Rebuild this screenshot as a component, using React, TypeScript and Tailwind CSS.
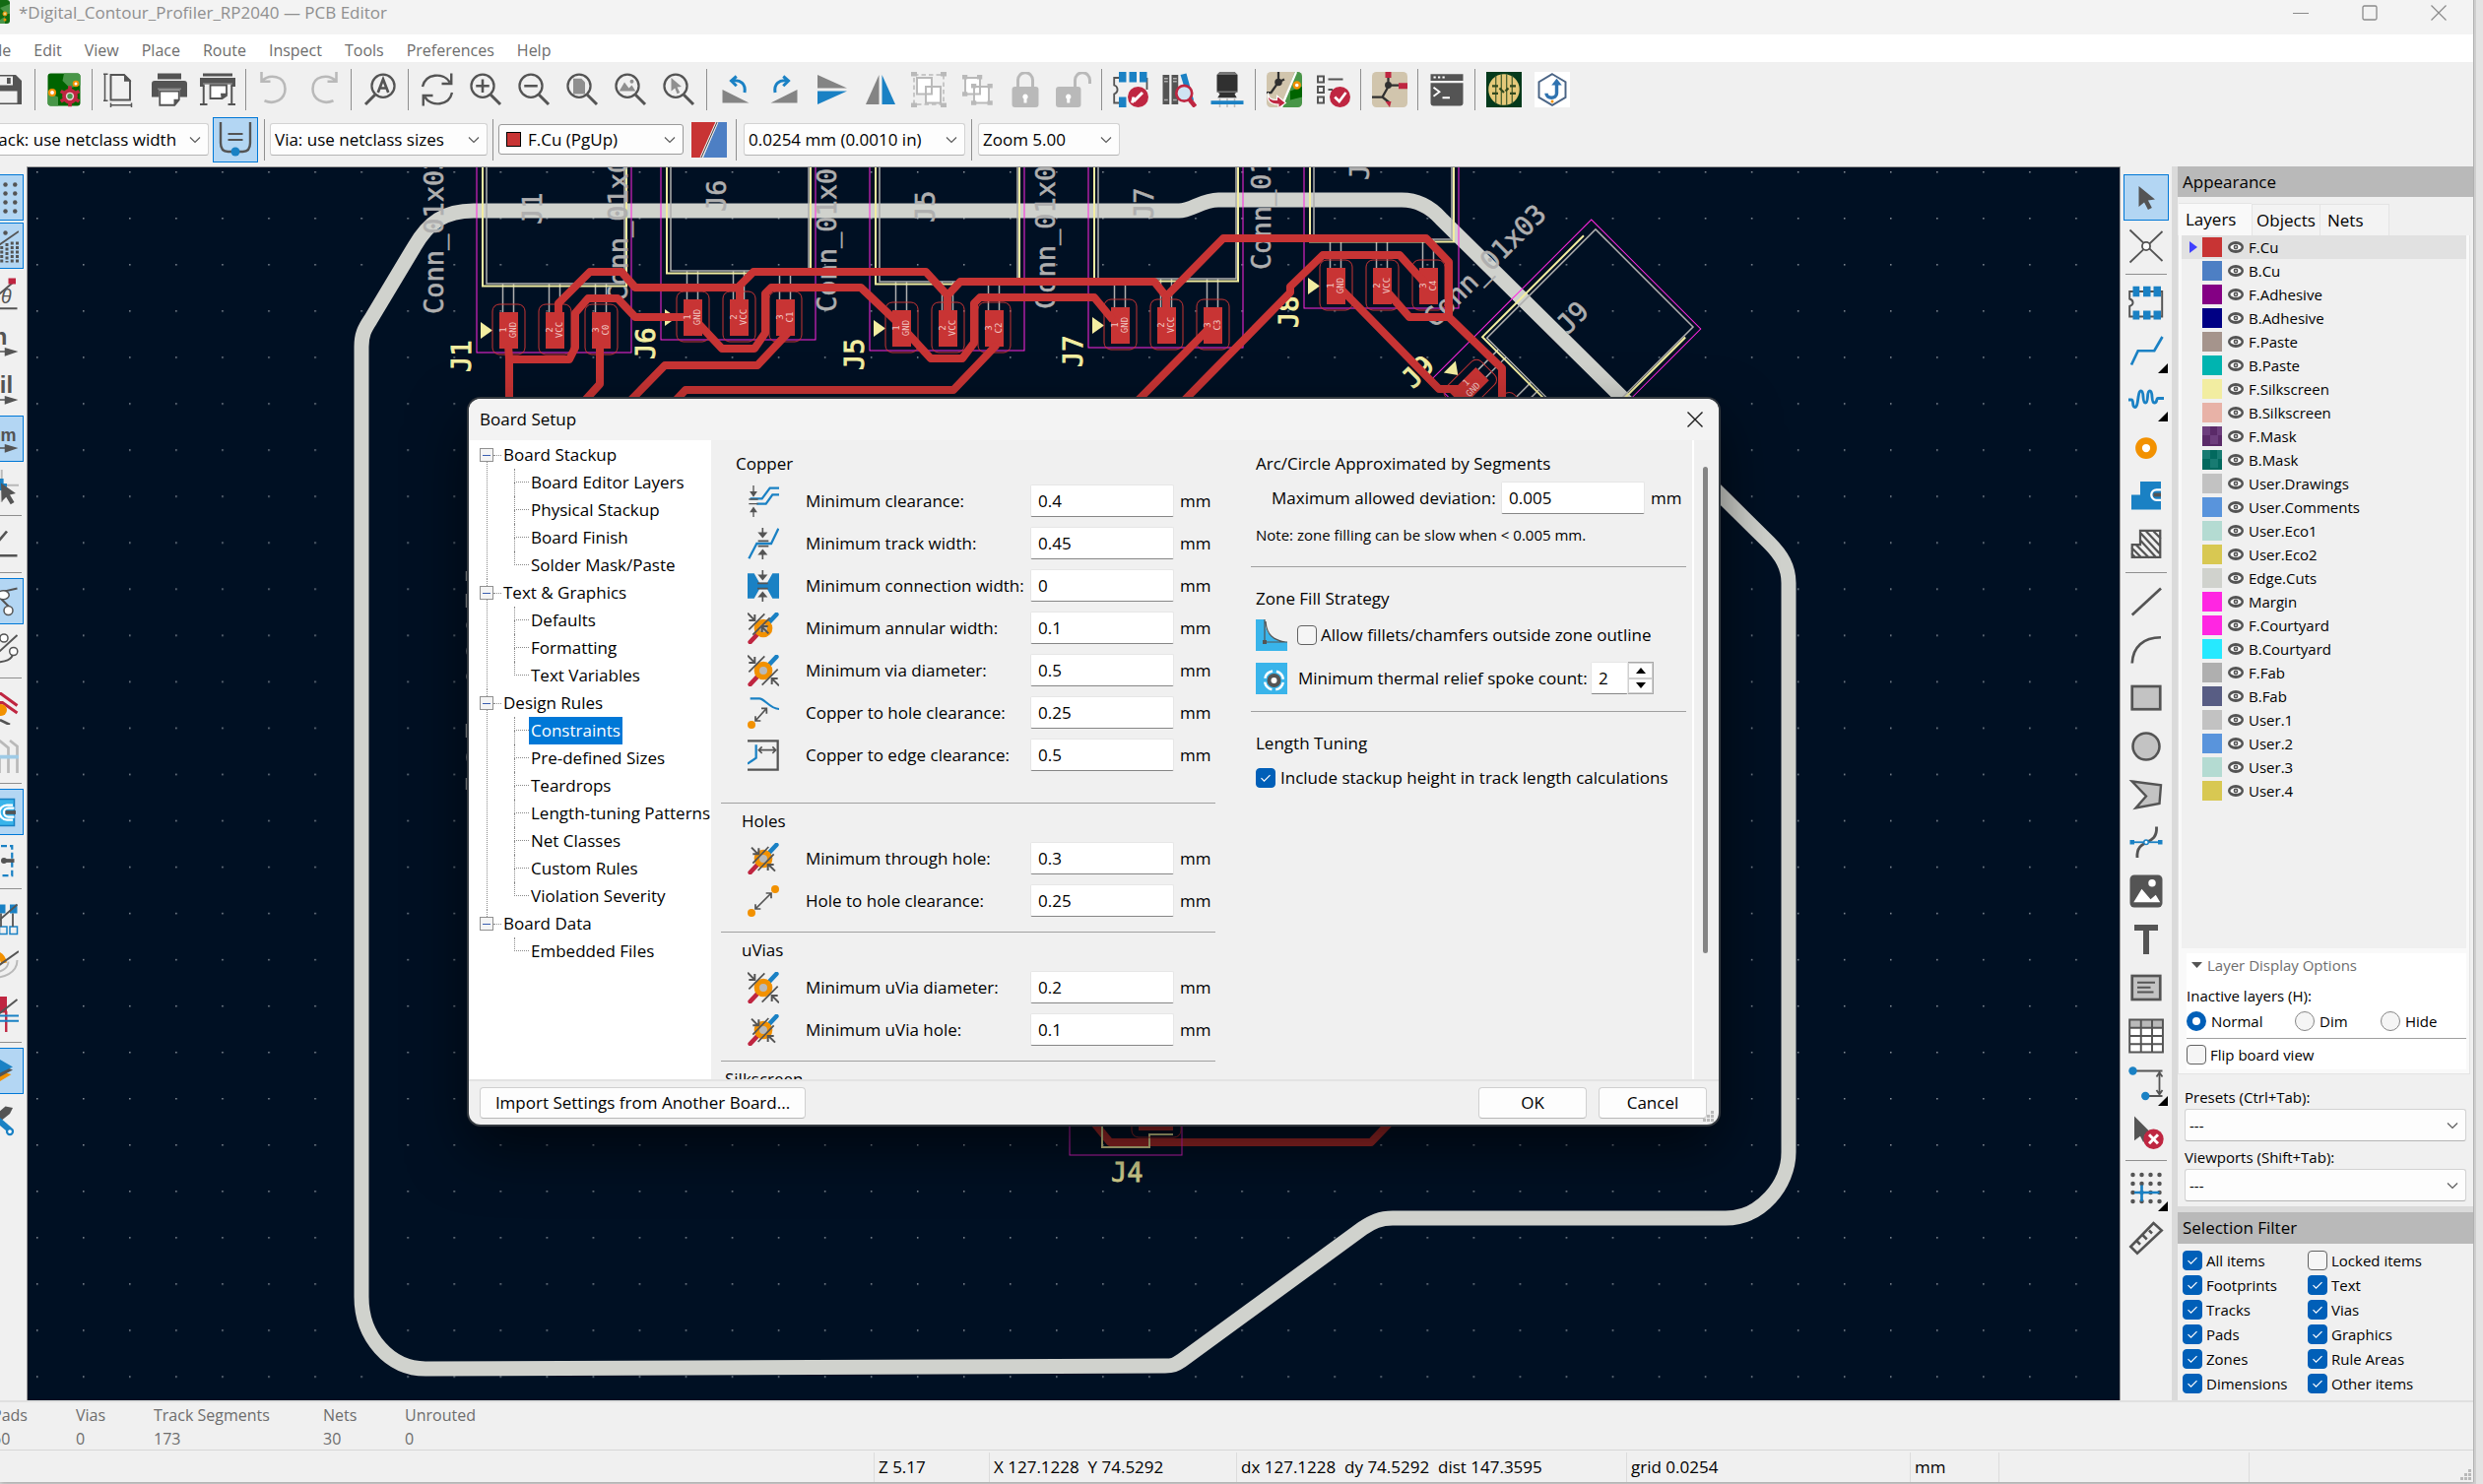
import { useState } from "react";
import type { ReactNode } from "react";

const DARK = "#545454";
const BLUE = "#1a81c4";
const RED = "#bf2641";
const ORANGE = "#f29100";
const GRAY = "#b9b9b9";

/* ---------- shared bits ---------- */

function Icon({ children, className = "size-9" }: { children: ReactNode; className?: string }) {
  return (
    <svg viewBox="0 0 24 24" className={`${className} shrink-0`} fill="none" aria-hidden="true">
      {children}
    </svg>
  );
}

function Chevron() {
  return (
    <svg
      viewBox="0 0 12 12"
      className="size-3 col-start-1 row-start-1 justify-self-end mr-2 pointer-events-none"
      fill="none"
      aria-hidden="true"
    >
      <path d="M1 3.5l5 5 5-5" stroke="#5c5c5c" strokeWidth="1.2" />
    </svg>
  );
}

interface ComboProps {
  label: string;
  value: string;
  className: string;
  selectClass?: string;
  swatch?: boolean;
}

function Combo({ label, value, className, selectClass = "pl-1 border-[#d2d2d2] border-b-[#b4b4b4]", swatch }: ComboProps) {
  return (
    <div className={`grid items-center shrink-0 ${className}`}>
      <select
        aria-label={label}
        className={`col-start-1 row-start-1 size-full appearance-none rounded-[3px] border bg-[#fdfdfd] text-black ${selectClass}`}
      >
        <option>{value}</option>
      </select>
      {swatch ? (
        <span className="col-start-1 row-start-1 ml-2 w-[15px] h-[15px] bg-[#c83434] border border-black pointer-events-none" />
      ) : null}
      <Chevron />
    </div>
  );
}

interface CheckProps {
  label: string;
  checked?: boolean;
  className?: string;
}

function Check({ label, checked = false, className = "gap-1" }: CheckProps) {
  return (
    <label className={`flex items-center whitespace-nowrap ${className}`}>
      <span className="grid size-5 shrink-0">
        <input
          type="checkbox"
          defaultChecked={checked}
          className="peer col-start-1 row-start-1 size-5 appearance-none rounded-[4px] border border-[#626262] bg-[#f5f5f5] checked:border-[#005fb8] checked:bg-[#005fb8]"
        />
        <svg
          viewBox="0 0 20 20"
          className="col-start-1 row-start-1 size-5 pointer-events-none hidden peer-checked:block"
          fill="none"
          aria-hidden="true"
        >
          <path d="M5.5 10.2l3 3 6-6" stroke="#fff" strokeWidth="1.2" />
        </svg>
      </span>
      <span>{label}</span>
    </label>
  );
}

/* ---------- top toolbar icons ---------- */

const lens = (
  <>
    <circle cx="10" cy="9.5" r="7.7" stroke={DARK} strokeWidth="1.5" />
    <path d="M15.5 15.5l6.5 6.5" stroke={DARK} strokeWidth="2" />
  </>
);

const topTools: Array<{ name: string; icon: ReactNode } | null> = [
  {
    name: "Save",
    icon: (
      <>
        <path d="M2 2h16l4 4v16H2z" fill={DARK} />
        <path d="M6 3h10v6H6zM5 13h14v8H5z" fill="#f0f0f0" />
        <path d="M12 4h2.500v4H12z" fill={DARK} />
      </>
    ),
  },
  null,
  {
    name: "Board Setup",
    icon: (
      <>
        <rect x="1" y="1" width="22" height="22" rx="2" fill="#006400" />
        <path d="M12 1h9a2 2 0 012 2v6l-7 2-5-5zM1 14l7 3v6H3a2 2 0 01-2-2z" fill="#489648" />
        <circle cx="4" cy="14" r="2" fill="#fff" stroke={ORANGE} strokeWidth="1.4" />
        <circle cx="20" cy="8" r="1.6" fill="#fff" stroke={ORANGE} strokeWidth="1.200" />
        <circle cx="16" cy="16.500" r="4" fill="#e8d5d8" stroke={RED} strokeWidth="2.500" />
        <path d="M16 9.500v3M16 20.500v3M9.800 13l2.600 1.500M19.600 18.500l2.600 1.500M9.800 20l2.600-1.500M19.600 14.500l2.600-1.500" stroke={RED} strokeWidth="2.500" />
        <circle cx="16" cy="16.500" r="1.800" fill="#489648" />
      </>
    ),
  },
  null,
  {
    name: "Page Settings",
    icon: (
      <>
        <path d="M5 2h9l4 4v13H5z" stroke={DARK} strokeWidth="1.300" />
        <path d="M14 1.500v5h5z" fill={DARK} />
        <path d="M0 1.500h3M1 1.500v18M0 19.500h3M5 22.500h14M5 21v3M19 21v3" stroke={DARK} strokeWidth="1" />
      </>
    ),
  },
  {
    name: "Print",
    icon: (
      <>
        <path d="M4 1h16v4H4zM2 6h20a2 2 0 012 2v9h-5v-5H5v5H0V8a2 2 0 012-2z" fill={DARK} />
        <path d="M4 11h16v1H4z" fill="#848484" />
        <path d="M5.500 13h13v6l-3 3.500H5.500z" fill="#fff" stroke={DARK} strokeWidth="1.200" />
        <path d="M15 18.500h4l-4 4.500z" fill={DARK} />
      </>
    ),
  },
  {
    name: "Plot",
    icon: (
      <>
        <path d="M2 1h20v2H2zM0 4h24v6h-3V8H3v2H0z" fill={DARK} />
        <path d="M2 8h20" stroke="#848484" />
        <path d="M2.500 9v13M21.500 9v13M0 22h5M19 22h5" stroke={DARK} strokeWidth="1.300" />
        <path d="M7 9h11v7l-3 2H7z" fill="#fff" stroke={DARK} strokeWidth="1.200" />
        <path d="M14 14.500h5l-4.500 4z" fill={DARK} />
      </>
    ),
  },
  null,
  {
    name: "Undo",
    icon: <path d="M3 0v6.500h6M3.500 6C8 1.500 19 2 19 11.500c0 7-7 11-14 8" stroke={GRAY} strokeWidth="1.700" />,
  },
  {
    name: "Redo",
    icon: <path d="M21 0v6.500h-6M20.500 6C16 1.500 5 2 5 11.500c0 7 7 11 14 8" stroke={GRAY} strokeWidth="1.700" />,
  },
  null,
  {
    name: "Find",
    icon: (
      <>
        <circle cx="14" cy="9.500" r="7.700" stroke={DARK} strokeWidth="1.500" />
        <path d="M8.500 15.500L2 22" stroke={DARK} strokeWidth="2" />
        <path d="M10.500 14L14 5l3.500 9M11.800 11h4.500" stroke={DARK} strokeWidth="1.800" />
      </>
    ),
  },
  null,
  {
    name: "Refresh",
    icon: (
      <path d="M2 10C4 1 16 0 20.500 7M21.500 1v7H15M22 14c-2 9-14 10-18.500 3M2.500 23v-7H9" stroke={DARK} strokeWidth="1.600" />
    ),
  },
  { name: "Zoom In", icon: <>{lens}<path d="M10 5v9M5.500 9.500h9" stroke={DARK} strokeWidth="1.700" /></> },
  { name: "Zoom Out", icon: <>{lens}<path d="M5.500 9.500h9" stroke={DARK} strokeWidth="1.700" /></> },
  { name: "Zoom to Fit", icon: <>{lens}<path d="M6 4.500h5.500L14 7v8H6z" fill="#8f8f8f" /></> },
  { name: "Zoom to Objects", icon: <>{lens}<path d="M4.500 13L8 7l3 4 2-2 2.500 4z" fill="#8f8f8f" /><circle cx="13" cy="6.500" r="1.300" fill="#8f8f8f" /></> },
  { name: "Zoom to Selection", icon: <>{lens}<path d="M7 4l7 6-3 .4 1.800 3.600-1.800.8L9.500 11 7 13z" fill="#8f8f8f" /></> },
  null,
  {
    name: "Rotate Counterclockwise",
    icon: (
      <>
        <path d="M3 12v9h18z" fill="#848484" />
        <path d="M18 14c1-6-3-9-8-8M12.500 3L9 6l3.500 3.500" stroke={BLUE} strokeWidth="2" />
      </>
    ),
  },
  {
    name: "Rotate Clockwise",
    icon: (
      <>
        <path d="M21 12v9H3z" fill="#848484" />
        <path d="M6 14c-1-6 3-9 8-8M11.500 3L15 6l-3.500 3.500" stroke={BLUE} strokeWidth="2" />
      </>
    ),
  },
  {
    name: "Mirror Vertically",
    icon: (
      <>
        <path d="M2 2v9h20z" fill="#848484" />
        <path d="M2 22v-9h20z" fill={BLUE} />
      </>
    ),
  },
  {
    name: "Mirror Horizontally",
    icon: (
      <>
        <path d="M2 22h9V2z" fill="#848484" />
        <path d="M22 22h-9V2z" fill={BLUE} />
      </>
    ),
  },
  {
    name: "Group",
    icon: (
      <>
        <rect x="2" y="2" width="20" height="20" stroke={GRAY} strokeWidth="1" strokeDasharray="3 2" />
        <path d="M0 0h4v3H0zM20 0h4v3h-4zM0 21h4v3H0zM20 21h4v3h-4z" fill={GRAY} />
        <path d="M4 4h10v11H4zM10 10h10v11H10z" fill="#fff" stroke={GRAY} strokeWidth="1.300" />
      </>
    ),
  },
  {
    name: "Ungroup",
    icon: (
      <>
        <path d="M4 4h10v11H4zM10 10h10v11H10z" fill="#fff" stroke={GRAY} strokeWidth="1.300" />
        <path d="M2 2h3.500v3H2zM12 2h3.500v3H12zM2 13.500h3.500v3H2zM8 8h3.500v3H8zM19 8h3.500v3H19zM8 19.500h3.500v3H8zM19 19.500h3.500v3H19z" fill={GRAY} />
      </>
    ),
  },
  {
    name: "Lock",
    icon: (
      <>
        <path d="M7 11V5.500a5 5 0 0110 0V11" stroke={GRAY} strokeWidth="2" />
        <rect x="3" y="10" width="18" height="14" rx="2" fill={GRAY} />
        <path d="M12 15a1.800 1.800 0 011 3.300V21h-2v-2.700A1.800 1.800 0 0112 15z" fill="#fff" />
      </>
    ),
  },
  {
    name: "Unlock",
    icon: (
      <>
        <path d="M13 11V5.500a5 5 0 0110 0V8" stroke={GRAY} strokeWidth="2" />
        <rect x="0" y="10" width="17" height="14" rx="2" fill={GRAY} />
        <path d="M8.500 15a1.800 1.800 0 011 3.300V21h-2v-2.700A1.800 1.800 0 018.500 15z" fill="#fff" />
      </>
    ),
  },
  null,
  {
    name: "Footprint Editor",
    icon: (
      <>
        <path d="M4 4H.8v5c3 1 3 5 0 6v6H4M23 4v8" stroke={DARK} strokeWidth="1.200" />
        <path d="M4 0h5v7H4zM11 0h5v7h-5zM18 0h5v7h-5zM4 17h5v7H4z" fill={BLUE} />
        <circle cx="17" cy="17" r="7" fill={RED} />
        <path d="M14 20l6-6M14 17l-1 4" stroke="#fff" strokeWidth="2" />
      </>
    ),
  },
  {
    name: "Footprint Library Browser",
    icon: (
      <>
        <path d="M1 2h4.500v20H1zM7 2h4.500v20H7z" fill={DARK} />
        <path d="M2 4.500h2.500M2 6.500h2.500M2 19h2.500M8 4.500h2.500M8 6.500h2.500M8 19h2.500" stroke="#b0b0b0" />
        <path d="M13 2l4-1 5 18-3 2z" fill={BLUE} />
        <circle cx="15.500" cy="14.500" r="5.300" fill="#cfe3f2" stroke={RED} strokeWidth="1.800" />
        <path d="M19 18.500l4 5" stroke={RED} strokeWidth="3" />
      </>
    ),
  },
  {
    name: "3D Viewer",
    icon: (
      <>
        <path d="M7 0h10l2 2v11l-2 2 1.500 2.500H5.500L7 15l-2-2V2z" fill="#303030" />
        <path d="M7 0h10l2 2H5zM5 13h14v1H5z" fill="#777" />
        <path d="M7 18v6M12 18v6M17 18v6" stroke={GRAY} />
        <path d="M1 19.500h22V22H1z" fill={BLUE} />
      </>
    ),
  },
  null,
  {
    name: "Update PCB from Schematic",
    icon: (
      <>
        <rect width="24" height="24" rx="3" fill="#d1c5ad" />
        <path d="M19 0h2a3 3 0 013 3v18a3 3 0 01-3 3H10z" fill="#489648" />
        <path d="M16 13l8-3v7l-8 2z" fill="#006400" />
        <circle cx="20.500" cy="9" r="2" fill="#fff" stroke={ORANGE} strokeWidth="1.600" />
        <path d="M8 0v7L3 14H0M8 7l4-2" stroke="#303030" strokeWidth="1.500" />
        <circle cx="8" cy="7" r="2.500" fill="#303030" />
        <path d="M20 0L10 24" stroke="#fff" strokeWidth="1.500" />
        <path d="M1 14c0 4 2 5 6 5v-3l6 5-5 3.500V22c-6 0-8-3-7-8z" fill={RED} stroke="#fff" strokeWidth=".7" />
      </>
    ),
  },
  {
    name: "Design Rules Checker",
    icon: (
      <>
        <path d="M2 3h4v4H2zM2 10h4v4H2zM2 17h4v4H2zM9 5h10M9 12h3" stroke={DARK} strokeWidth="1.300" />
        <circle cx="17" cy="17" r="7" fill={RED} />
        <path d="M13.500 17l3 3 4.500-6" stroke="#fff" strokeWidth="1.800" />
      </>
    ),
  },
  null,
  {
    name: "Schematic Editor",
    icon: (
      <>
        <rect width="24" height="24" rx="3" fill="#d1c5ad" />
        <path d="M11 4v6L7 17H0M11 9h7M7 17l5 4" stroke="#303030" strokeWidth="1.500" />
        <path d="M9 0h4v4H9zM18 7.500h6v4h-6z" fill={RED} />
        <path d="M9 20h4l-1 4z" fill={RED} />
        <circle cx="11" cy="9" r="2.300" fill="#303030" />
      </>
    ),
  },
  null,
  {
    name: "Scripting Console",
    icon: (
      <>
        <path d="M1 1.500h22v4.500H1zM1 7.500h22V21a2 2 0 01-2 2H3a2 2 0 01-2-2z" fill={DARK} />
        <path d="M3 3.700h1.500M6 3.700h1.500M9 3.700h1.500" stroke="#fff" strokeWidth="1.300" />
        <path d="M3 10.500l4 3-4 3M9 17.500h5" stroke="#fff" strokeWidth="1.200" />
      </>
    ),
  },
  null,
  {
    name: "Round Tracks",
    icon: (
      <>
        <path d="M0 0h24v24H0z" fill="#053a1c" />
        <circle cx="12" cy="12" r="10.500" fill="#e5c97a" />
        <path d="M6.500 2.500v19M10.200 1.500v21M13.800 1.500v21M17.500 2.500v19" stroke="#3f5a2a" strokeWidth=".8" />
        <path d="M4 9.500h4M4 14.500h4M16 9.500h4M16 14.500h4M9 11l3 3M15 11l-2 2" stroke="#31491f" strokeWidth="1.500" />
      </>
    ),
  },
  {
    name: "Fabrication Toolkit",
    icon: (
      <>
        <path d="M0 0h24v24H0z" fill="#fff" />
        <path d="M12 1.500l9 5.300v10.500l-9 5.200-9-5.200V6.800z" stroke="#4a6485" strokeWidth="1.300" />
        <path d="M15 8v6.500c0 4-7 4-7 0" stroke="#2f73b0" strokeWidth="2.300" />
        <path d="M11.500 9L15 4.500 18.500 9z" fill="#2f73b0" />
        <circle cx="12" cy="20" r="1" fill={ORANGE} />
      </>
    ),
  },
];

/* ---------- left and right tool strips ---------- */

interface Tool {
  name: string;
  icon: ReactNode;
  on?: boolean;
  more?: boolean;
}

const dots = (xs: number[], ys: number[]) =>
  xs.map((x) => ys.map((y) => <circle key={`${x}-${y}`} cx={x} cy={y} r="1.500" fill={DARK} />));

const leftTools: Array<Tool | null> = [
  { name: "Grid", on: true, icon: dots([2, 8.500, 15, 21.500], [3, 9, 15, 21]) },
  {
    name: "Grid Overrides",
    on: true,
    icon: (
      <>
        {dots([3, 15], [3])}
        <path d="M1 18L24 2" stroke={DARK} strokeWidth="1.200" />
        <path d="M12.500 12v11M16 10v13M19.500 9v14M23 9v14" stroke={DARK} strokeWidth="2" strokeDasharray="2 1" />
      </>
    ),
  },
  {
    name: "Polar Coordinates",
    icon: (
      <>
        <path d="M0 21L20 4M0 21.500h23" stroke={DARK} strokeWidth="1.300" />
        <path d="M17 1h5v4h-5z" fill={RED} />
        <text x="12" y="18" fontSize="13" fontStyle="italic" fill={DARK} fontFamily="Liberation Sans, sans-serif">θ</text>
      </>
    ),
  },
  {
    name: "Inches",
    icon: (
      <>
        <text x="2" y="13" fontSize="16" fontWeight="700" fill={DARK} fontFamily="Liberation Sans, sans-serif">in</text>
        <path d="M0 18h15v-2l7 2-7 2.500V18" fill={DARK} stroke={DARK} />
      </>
    ),
  },
  {
    name: "Mils",
    icon: (
      <>
        <text x="-3" y="13" fontSize="16" fontWeight="700" fill={DARK} fontFamily="Liberation Sans, sans-serif">mil</text>
        <path d="M0 18h15v-2l7 2-7 2.500V18" fill={DARK} stroke={DARK} />
      </>
    ),
  },
  {
    name: "Millimeters",
    on: true,
    icon: (
      <>
        <text x="1" y="13" fontSize="12" fontWeight="700" fill={DARK} fontFamily="Liberation Sans, sans-serif">mm</text>
        <path d="M0 18h15v-2l7 2-7 2.500V18" fill={DARK} stroke={DARK} />
      </>
    ),
  },
  {
    name: "Full-Window Crosshair",
    icon: (
      <>
        <path d="M12.500 0v22M0 10.500h24" stroke={GRAY} strokeWidth="1.300" />
        <path d="M8 10.500h8M12.500 6v8" stroke={BLUE} strokeWidth="2.500" />
        <path d="M12 9l10 7-4 1 3 5-2.500 1.500-3-5-3 3z" fill={DARK} />
      </>
    ),
  },
  null,
  { name: "Free Angle", icon: <path d="M16 3L2 19.500h21" stroke={DARK} strokeWidth="1.800" /> },
  null,
  {
    name: "Ratsnest",
    on: true,
    icon: (
      <>
        <path d="M0 6h10L23 3M10 8l9 9" stroke={DARK} strokeWidth="1.300" />
        <ellipse cx="13.500" cy="7.500" rx="4" ry="3" fill="#fff" stroke={DARK} />
        <circle cx="17" cy="18" r="3" fill="#fff" stroke={DARK} />
      </>
    ),
  },
  {
    name: "Curved Ratsnest",
    icon: (
      <>
        <path d="M0 23L23 2M20 14c0 6-8 6-14 7" stroke={DARK} strokeWidth="1.300" />
        <circle cx="14" cy="4" r="2.700" fill="#fff" stroke={DARK} />
        <circle cx="20.500" cy="13" r="2.700" fill="#fff" stroke={DARK} />
      </>
    ),
  },
  null,
  {
    name: "Inactive Layer Display",
    icon: (
      <>
        <path d="M0 3h12l11 8M3 9h10l10 7" stroke={RED} strokeWidth="2" />
        <path d="M0 21h12l6 3" stroke={DARK} strokeWidth="1.800" />
        <circle cx="12" cy="14" r="4" fill={ORANGE} />
      </>
    ),
  },
  {
    name: "Net Highlighting",
    icon: (
      <>
        <path d="M11 2l6 5v17M3 8l8 5v11M18 2l5 4v18" stroke={GRAY} strokeWidth="1.800" />
        <path d="M0 13h24" stroke="#9fcbe6" strokeWidth="2.500" />
      </>
    ),
  },
  null,
  {
    name: "Zone Fills",
    on: true,
    icon: (
      <>
        <path d="M0 3h21v18H0z" fill="#39b4ea" stroke={BLUE} />
        <path d="M20 7h-4a5 5 0 000 10h4M21 9h-4a3 3 0 000 6h4" stroke="#fff" strokeWidth="1.500" />
        <path d="M15 12h7" stroke={DARK} strokeWidth="2.500" />
      </>
    ),
  },
  {
    name: "Zone Outlines",
    icon: (
      <>
        <path d="M0 2h19.500v20H0" stroke={BLUE} strokeWidth="1.500" strokeDasharray="4 2" />
        <path d="M14 12h7" stroke={DARK} strokeWidth="2.500" />
        <circle cx="14" cy="12" r="2" fill={DARK} />
      </>
    ),
  },
  null,
  {
    name: "Sketch Pads",
    icon: (
      <>
        <path d="M10 3h5v6h-5zM18 3h5v6h-5zM0 3h7v6H0z" fill={BLUE} />
        <path d="M11 18h5v5h-5zM18 18h5v5h-5z" stroke={BLUE} />
        <path d="M0 23L23 3M20 9v9M12 9v9" stroke={DARK} strokeWidth="1.200" />
      </>
    ),
  },
  {
    name: "Sketch Vias",
    icon: (
      <>
        <path d="M0 4c8-2 13 0 14 6M0 9c6-1 9 0 10 3" stroke={ORANGE} strokeWidth="4" />
        <path d="M23 8c0 8-8 13-22 12M17 9c0 5-6 8-12 7" stroke={GRAY} strokeWidth="1.300" />
        <path d="M0 19L24 2" stroke={DARK} strokeWidth="1.300" />
      </>
    ),
  },
  {
    name: "Sketch Tracks",
    icon: (
      <>
        <path d="M8 0h8v11H8z" fill={RED} />
        <path d="M15.500 10v14" stroke={RED} strokeWidth="1.600" />
        <path d="M0 13h24M0 16.500h24" stroke={BLUE} strokeWidth="1.300" />
        <path d="M0 20L23 2" stroke={DARK} strokeWidth="1.300" />
      </>
    ),
  },
  null,
  {
    name: "Appearance Manager",
    on: true,
    icon: (
      <>
        <path d="M0 20L4 23l15-9-4-1z" fill={ORANGE} />
        <path d="M0 17l3 3 17-9-5-2z" fill={DARK} />
        <path d="M-8 8L6 1l14 8L5 16z" fill={BLUE} />
      </>
    ),
  },
  {
    name: "Properties Manager",
    icon: (
      <>
        <path d="M0 16L15 3l5 1-2 4L3 20z" fill={DARK} />
        <path d="M4 7l14 12" stroke={BLUE} strokeWidth="4" />
        <circle cx="18" cy="20" r="2" fill="#fff" stroke={BLUE} strokeWidth="1.500" />
      </>
    ),
  },
];

const rightTools: Array<Tool | null> = [
  { name: "Select", on: true, icon: <path d="M7 4l11 9-4.700.6 2.600 5-2.600 1.400-2.600-5L7 18z" fill={DARK} /> },
  {
    name: "Local Ratsnest",
    icon: (
      <>
        <path d="M1 1l22 21M23 2L1 23" stroke={DARK} strokeWidth="1.200" />
        <circle cx="12" cy="12" r="2.700" fill="#fff" stroke={DARK} strokeWidth="1.200" />
      </>
    ),
  },
  null,
  {
    name: "Place Footprints",
    icon: (
      <>
        <path d="M.8 4v5c3 1 3 4 0 5v7h22V4z" stroke={DARK} strokeWidth="1.300" />
        <path d="M3 .500h4.500v7H3zM10 .500h5v7h-5zM17 .500h5v7h-5zM3 17h4.500v6H3zM10 17h5v6h-5zM17 17h5v6h-5z" fill={BLUE} />
      </>
    ),
  },
  { name: "Route Tracks", more: true, icon: <path d="M2 21l4.500-9.500h11L23 2" stroke={BLUE} strokeWidth="1.800" /> },
  {
    name: "Tune Length",
    more: true,
    icon: (
      <path
        d="M0 12h2c2 0 0 5 2.500 5S6 6 8.500 6 9 14 11.500 14s.5-8 3-8 .5 8 3 8 1-3 2.500-3H24"
        stroke={BLUE}
        strokeWidth="1.900"
      />
    ),
  },
  { name: "Place Vias", icon: <circle cx="12" cy="12" r="5" fill="#fff" stroke={ORANGE} strokeWidth="4.500" /> },
  {
    name: "Draw Filled Zones",
    icon: (
      <>
        <path d="M8 2h14v19H2V11h6z" fill={BLUE} />
        <path d="M22 7.500h-3a3.500 3.500 0 000 7h3" stroke="#fff" strokeWidth="1.500" />
        <path d="M17 11h5" stroke={DARK} strokeWidth="2.500" />
      </>
    ),
  },
  {
    name: "Draw Rule Areas",
    icon: (
      <path
        d="M8 2.500h13.500v18h-19V12H8zM8 4l13 14M12 3l9.500 10M17 3l5 5M8 9l11 12M5 12l9 9M2 14l7 7M2 18l3 3"
        stroke={DARK}
        strokeWidth="1.500"
      />
    ),
  },
  null,
  { name: "Draw Lines", icon: <path d="M2.500 21L22 3" stroke={DARK} strokeWidth="1.800" /> },
  { name: "Draw Arcs", icon: <path d="M2.500 21C3 10 10 3.500 22 3.500" stroke={DARK} strokeWidth="1.800" /> },
  { name: "Draw Rectangles", icon: <rect x="2.500" y="4" width="19" height="15.500" fill="#c3c3c3" stroke={DARK} strokeWidth="1.800" /> },
  { name: "Draw Circles", icon: <circle cx="12" cy="12" r="9" fill="#c3c3c3" stroke={DARK} strokeWidth="1.700" /> },
  { name: "Draw Polygons", icon: <path d="M2.500 3L22 5.500 21 18 5 21l7-8z" fill="#c3c3c3" stroke={DARK} strokeWidth="1.600" /> },
  {
    name: "Draw Bezier Curves",
    icon: (
      <>
        <path d="M19 1c1 14-14 7-13 21" stroke={DARK} strokeWidth="1.900" />
        <path d="M2 11.500h20" stroke={BLUE} strokeWidth="1.200" />
        <path d="M1 10h3v3H1zM20 10h3v3h-3z" fill={BLUE} />
        <circle cx="12" cy="11.500" r="1.500" fill="#fff" stroke={BLUE} />
      </>
    ),
  },
  {
    name: "Place Images",
    icon: (
      <>
        <rect x="1" y="1" width="22" height="22" rx="3" fill={DARK} />
        <path d="M3.500 19.500l5.500-9 6 7 3.500-3 3 5z" fill="#fff" />
        <circle cx="16" cy="6.500" r="2.500" fill="#fff" />
      </>
    ),
  },
  { name: "Place Text", icon: <path d="M4 2h16v4h-6v16h-4V6H4z" fill={DARK} /> },
  {
    name: "Draw Text Boxes",
    icon: (
      <>
        <rect x="2.500" y="4" width="19" height="16" fill="#c3c3c3" stroke={DARK} strokeWidth="1.800" />
        <path d="M6 8.500h12M6 11.800h9M6 15h11" stroke={DARK} strokeWidth="1.300" />
      </>
    ),
  },
  {
    name: "Draw Tables",
    icon: (
      <>
        <path d="M.8 1h22.500v5.500H.8z" fill={GRAY} />
        <path d="M.8 6.500h22.500V23H.8z" fill="#fff" />
        <path d="M.8 1h22.500v22H.8zM.8 6.500h22.500M.8 12h22.500M.8 17.500h22.500M8.500 1v22M16 1v22" stroke={DARK} strokeWidth="1.300" />
      </>
    ),
  },
  {
    name: "Draw Dimensions",
    more: true,
    icon: (
      <>
        <path d="M3 3h20M12 20h11M21 4.500v14M19 7l2-3 2 3M19 16l2 3 2-3" stroke={DARK} strokeWidth="1.200" />
        <circle cx="3" cy="3" r="2.800" fill={BLUE} />
        <circle cx="11.500" cy="20" r="2.800" fill={BLUE} />
      </>
    ),
  },
  {
    name: "Delete Items",
    icon: (
      <>
        <path d="M4 1l12 12-5 .5 2 4-3 1-2-4-4 3z" fill={DARK} />
        <circle cx="17" cy="16.500" r="6.800" fill={RED} />
        <path d="M14 13.500l6 6M20 13.500l-6 6" stroke="#fff" strokeWidth="2" />
      </>
    ),
  },
  null,
  {
    name: "Grid Origin",
    more: true,
    icon: (
      <>
        {dots([3, 9, 15, 21], [2, 8, 14, 20])}
        <path d="M9 9v11M4 14h17" stroke={BLUE} strokeWidth="1.800" />
      </>
    ),
  },
  {
    name: "Measure",
    icon: (
      <path
        d="M1.500 18L17 2l5.500 5L6 22.500zM6 14.500l2 2M10 10.500l2.500 2.500M14 7l2 2"
        stroke={DARK}
        strokeWidth="1.700"
      />
    ),
  },
];

function ToolStrip({ tools }: { tools: Array<Tool | null> }) {
  return (
    <>
      {tools.map((t, i) =>
        t ? (
          <button
            key={t.name}
            type="button"
            aria-label={t.name}
            className={`relative my-px w-[46px] h-[47px] shrink-0 flex items-center justify-center border ${
              t.on ? "border-[#0078d7] bg-[#b3d6f3]" : "border-transparent"
            }`}
          >
            <Icon>{t.icon}</Icon>
            {t.more ? (
              <svg viewBox="0 0 10 10" className="absolute right-0 bottom-0 size-2.5" aria-hidden="true">
                <path d="M10 0v10H0z" fill="#000" />
              </svg>
            ) : null}
          </button>
        ) : (
          <div key={i} className="my-1 h-px w-[42px] mx-0.5 shrink-0 bg-[#8f8f8f]" />
        ),
      )}
    </>
  );
}

/* ---------- board canvas ---------- */

interface ConnectorProps {
  x: number;
  y: number;
  name: string;
  net: string;
  angle?: number;
}

// Drawn around pad 1, so every footprint only needs a position.
function Connector({ x, y, name, net, angle = 0 }: ConnectorProps) {
  return (
    <g transform={`translate(${x} ${y}) rotate(${angle})`}>
      <g stroke="#afafaf" strokeWidth="1.500" fill="none">
        <rect x="-22" y="-203" width="140" height="156" />
        {[0, 47, 94].map((px) => (
          <path key={px} d={`M${px - 5.5} -47v29M${px + 5.5} -47v29`} />
        ))}
      </g>
      <g fill="#afafaf" stroke="#afafaf" strokeWidth=".6" fontSize="27">
        <text transform="translate(-66 -16) rotate(-90)">Conn_01x03</text>
        <text transform="translate(34 -107) rotate(-90)">{name}</text>
      </g>
      <path d="M-26 -190V-44.500H120V-190" stroke="#f2eda1" strokeWidth="2" fill="none" />
      <path d="M-28 -8l12 8.500-12 8.500z" fill="#f2eda1" />
      <text transform="translate(-38 43) rotate(-90)" fill="#f2eda1" stroke="#f2eda1" fontSize="27">
        {name}
      </text>
      <rect x="-32" y="-207" width="157" height="230" stroke="#ff26e2" fill="none" />
      {["GND", "VCC", net].map((pad, i) => (
        <g key={pad} transform={`translate(${i * 47} 0)`}>
          <rect x="-16" y="-26" width="33" height="51" rx="7" stroke="#c83434" fill="none" />
          <rect x="-9" y="-18" width="19" height="37" fill="#c83434" />
        </g>
      ))}
    </g>
  );
}

function PadNames({ x, y, net, angle = 0 }: Omit<ConnectorProps, "name">) {
  return (
    <g transform={`translate(${x} ${y}) rotate(${angle})`} fill="#f0c4c0" fontSize="9" textAnchor="middle">
      {["GND", "VCC", net].map((pad, i) => (
        <g key={pad} transform={`translate(${i * 47} 0) rotate(-90)`}>
          <text y="-2">{i + 1}</text>
          <text y="8">{pad}</text>
        </g>
      ))}
    </g>
  );
}

const connectors = [
  { x: 515, y: 335, name: "J1", net: "C0" },
  { x: 702, y: 322, name: "J6", net: "C1" },
  { x: 914, y: 333, name: "J5", net: "C2" },
  { x: 1136, y: 330, name: "J7", net: "C3" },
  { x: 1355, y: 290, name: "J8", net: "C4" },
  { x: 1491, y: 392, name: "J9", net: "C5", angle: 45 },
];

const tracks = [
  "M566 320V308L598 276H630L644 292H750",
  "M750 310V290L764 276H939L961 300V320",
  "M961 300L974 286H1171L1183 301V316",
  "M1183 301L1241 242H1447L1470 266V322L1524 374V420",
  "M1470 322H1430L1408 297",
  "M515 350L516 365V420",
  "M516 365H577L583 353V318L596 303H626L644 322H702L732 354H765L776 338V298L782 292H873L911 328L944 364H976L988 348V308L994 302H1110L1129 325",
  "M608 350V390L588 412",
  "M799 338L768 371H674L634 412",
  "M1011 350L967 396H695L680 412",
  "M1228 332L1149 412",
  "M1196 412L1309 297V291L1342 259H1420L1448 290",
  "M1362 295L1460 395H1491",
];

function BoardCanvas() {
  return (
    <svg
      className="absolute inset-0 size-full"
      fontFamily="DejaVu Sans Mono, monospace"
      role="img"
      aria-label="Board layout"
    >
      <defs>
        <pattern id="grid" x="36" y="174" width="47.05" height="47.05" patternUnits="userSpaceOnUse">
          <rect width="1.500" height="1.500" fill="#8a929c" />
        </pattern>
      </defs>
      <g transform="translate(-27 -170)">
        <rect x="27" y="170" width="100%" height="100%" fill="url(#grid)" />
        <path
          d="M480 214H1196C1208 214 1220 203 1236 203H1422C1440 203 1452 211 1462 222L1795 551C1808 564 1815 576 1815 592V1170C1815 1203 1787 1237 1751 1237H1413C1400 1237 1392 1241 1383 1247L1198 1382C1192 1386 1190 1387 1182 1387L431 1390C395 1390 366 1358 366 1317V352C366 340 369 334 375 325L420 250C434 226 450 214 480 214z"
          stroke="#d0d2cd"
          strokeWidth="15"
          fill="none"
        />
        {connectors.map((c) => (
          <Connector key={c.name} {...c} />
        ))}
        <g stroke="#c83434" strokeWidth="8" fill="none" strokeLinejoin="round">
          {tracks.map((d) => (
            <path key={d} d={d} />
          ))}
          <path d="M1108 1138L1126 1160H1391L1412 1138" stroke="#982626" />
        </g>
        {connectors.map((c) => (
          <PadNames key={c.name} x={c.x} y={c.y} net={c.net} angle={c.angle} />
        ))}
        <path d="M1118 1130V1165H1166V1152H1190" stroke="#c9c587" strokeWidth="2" fill="none" />
        <rect x="1148" y="1120" width="50" height="35" rx="7" stroke="#982626" fill="none" />
        <rect x="1155" y="1120" width="35" height="28" fill="#982626" />
        <rect x="1085" y="1100" width="114" height="73" stroke="#d21fba" fill="none" />
        <text x="1127" y="1200" fontSize="27" fill="#d6d28f" stroke="#d6d28f" strokeWidth=".8">
          J4
        </text>
        <g stroke="#8d8f92" strokeWidth="2.500" fill="none">
          <path d="M473 580v10M473 603v14M478 630c-6 0-6 10 0 10M478 655c-6 0-6 12 0 12M478 682c-6 0-6 10 0 10M473 735v14M478 762c-6 0-6 14 0 14M473 790v12" />
        </g>
      </g>
    </svg>
  );
}

/* ---------- board setup dialog ---------- */

const tree = [
  { title: "Board Stackup", items: ["Board Editor Layers", "Physical Stackup", "Board Finish", "Solder Mask/Paste"] },
  { title: "Text & Graphics", items: ["Defaults", "Formatting", "Text Variables"] },
  {
    title: "Design Rules",
    items: [
      "Constraints",
      "Pre-defined Sizes",
      "Teardrops",
      "Length-tuning Patterns",
      "Net Classes",
      "Custom Rules",
      "Violation Severity",
    ],
  },
  { title: "Board Data", items: ["Embedded Files"] },
];

function SettingsTree() {
  const [page, setPage] = useState("Constraints");
  return (
    <nav aria-label="Board setup pages" className="w-[246px] shrink-0 bg-white pl-[11px] pt-px overflow-hidden">
      <ul>
        {tree.map((group, g) => (
          <li key={group.title} className="flex">
            <div className="w-3.5 shrink-0 flex flex-col items-center">
              <span className={`h-[7px] w-px ${g ? "border-l border-dotted border-[#8a8a8a]" : ""}`} />
              <span className="size-3.5 shrink-0 flex items-center justify-center border border-[#919191] bg-[#f4f4f4]">
                <span className="h-px w-2 bg-[#3b5fb0]" />
              </span>
              {g < tree.length - 1 ? <span className="flex-1 w-px border-l border-dotted border-[#8a8a8a]" /> : null}
            </div>
            <div className="w-[230px] shrink-0">
              <div className="h-7 flex items-center whitespace-nowrap">
                <span className="w-2 mr-0.5 border-t border-dotted border-[#8a8a8a]" />
                {group.title}
              </div>
              <ul className="pl-[21px]">
                {group.items.map((item, i) => (
                  <li key={item} className="h-7 flex items-center whitespace-nowrap">
                    <span className="w-[15px] h-full shrink-0 flex flex-col">
                      <span className="h-3.5 border-l border-b border-dotted border-[#8a8a8a]" />
                      {i < group.items.length - 1 ? (
                        <span className="flex-1 border-l border-dotted border-[#8a8a8a]" />
                      ) : null}
                    </span>
                    <button
                      type="button"
                      onClick={() => setPage(item)}
                      className={`h-7 px-0.5 ${item === page ? "bg-[#0078d7] text-white" : ""}`}
                    >
                      {item}
                    </button>
                  </li>
                ))}
              </ul>
            </div>
          </li>
        ))}
      </ul>
    </nav>
  );
}

// Via crossing a red and a blue track, with two dimension lines either side.
const viaBase = (
  <>
    <path d="M2 22.500L9 15" stroke={RED} strokeWidth="3.500" strokeLinecap="round" />
    <path d="M15 9l7-7.500" stroke={BLUE} strokeWidth="3.500" strokeLinecap="round" />
    <circle cx="12" cy="12" r="5" fill={GRAY} stroke={ORANGE} strokeWidth="4" />
  </>
);
const arrowIn = <path d="M0 .500l5 5M5.500 1.500v4.500H1" stroke={DARK} strokeWidth="1.500" />;
const arrowBack = <path d="M24 23.500l-5-5M18.500 22.500V18H23" stroke={DARK} strokeWidth="1.500" />;

const viaDiameter = (
  <>
    {viaBase}
    <path d="M1 13L13 1M11 23l12-12" stroke={DARK} strokeWidth="1.300" />
    {arrowIn}
    {arrowBack}
  </>
);
const viaHole = (
  <>
    {viaBase}
    <path d="M4 15.500L16 3M8 21L20 8.500" stroke={DARK} strokeWidth="1.300" />
    <path d="M3 3.500l5 5M8.500 4v4.500H4M21 21.500l-5-5M15.500 21v-4.500H20" stroke={DARK} strokeWidth="1.500" />
  </>
);
const squeeze = <path d="M11.500 0v6M9 4l2.500 3L14 4zM11.500 24v-6M9 20l2.500-3 2.500 3z" stroke={DARK} fill={DARK} strokeWidth="1.200" />;

const sections = [
  {
    title: "Copper",
    indent: "pl-[15px]",
    gap: "mt-8",
    rows: [
      {
        label: "Minimum clearance:",
        value: "0.4",
        icon: (
          <>
            <path d="M2 10h9l6-8h7M7 14h7l5-7h5" stroke={BLUE} strokeWidth="1.700" />
            <path d="M1 10.500h7M1 14h7M4.500 0v6M2.500 5l2 3 2-3zM4.500 24v-5M2.500 20l2-3 2 3z" stroke={DARK} fill={DARK} />
          </>
        ),
      },
      {
        label: "Minimum track width:",
        value: "0.45",
        icon: (
          <>
            <path d="M1 23.500L7 12h11l5.500-11.500" stroke={BLUE} strokeWidth="1.700" />
            <path d="M8 10h8M8 14h8" stroke={DARK} strokeWidth="1.300" />
            {squeeze}
          </>
        ),
      },
      {
        label: "Minimum connection width:",
        value: "0",
        icon: (
          <>
            <path d="M0 2.500h5l4 7h6l4-7h5v19h-5l-4-7H9l-4 7H0z" fill={BLUE} />
            <path d="M7.500 10h8M7.500 14h8" stroke={DARK} strokeWidth="1.300" />
            {squeeze}
          </>
        ),
      },
      {
        label: "Minimum annular width:",
        value: "0.1",
        icon: (
          <>
            {viaBase}
            <path d="M1 13L13 1M4 17L17 4" stroke={DARK} strokeWidth="1.300" />
            {arrowIn}
            <path d="M16 16l-5-5M11 15v-4.500h4.500" stroke={DARK} strokeWidth="1.500" />
          </>
        ),
      },
      { label: "Minimum via diameter:", value: "0.5", icon: viaDiameter },
      {
        label: "Copper to hole clearance:",
        value: "0.25",
        icon: (
          <>
            <path d="M2 1h7c4 0 8 8 15 8" stroke={BLUE} strokeWidth="1.600" />
            <path d="M6 18l8-9M6 14.500V18h4M10.500 8.500h4v4" stroke={DARK} strokeWidth="1.300" />
            <circle cx="3" cy="21" r="3" fill={ORANGE} />
          </>
        ),
      },
      {
        label: "Copper to edge clearance:",
        value: "0.5",
        icon: (
          <>
            <path d="M0 1h23v22H0" stroke={DARK} strokeWidth="1.700" />
            <path d="M6.500 4v10L0 18.500" stroke={BLUE} strokeWidth="1.700" />
            <path d="M8.500 8h13M11 5.500L8.500 8l2.500 2.500M19 5.500L21.500 8 19 10.500" stroke={DARK} strokeWidth="1.200" />
          </>
        ),
      },
    ],
  },
  {
    title: "Holes",
    indent: "pl-[21px]",
    gap: "mt-[15px]",
    rows: [
      { label: "Minimum through hole:", value: "0.3", icon: viaHole },
      {
        label: "Hole to hole clearance:",
        value: "0.25",
        icon: (
          <>
            <path d="M6 18L18 6M6 14.500V18h4M14 6h4v4" stroke={DARK} strokeWidth="1.300" />
            <circle cx="3" cy="21" r="3" fill={ORANGE} />
            <circle cx="21" cy="3" r="3" fill={ORANGE} />
          </>
        ),
      },
    ],
  },
  {
    title: "uVias",
    indent: "pl-[21px]",
    gap: "mt-[15px]",
    rows: [
      { label: "Minimum uVia diameter:", value: "0.2", icon: viaDiameter },
      { label: "Minimum uVia hole:", value: "0.1", icon: viaHole },
    ],
  },
];

const fieldClass = "h-[33px] bg-white border border-[#e6e6e6] border-b-[#868686] rounded-[2px] pl-[7px]";
const buttonClass = "h-8 rounded-[4px] border border-[#d0d0d0] border-b-[#b8b8b8] bg-[#fdfdfd]";

function BoardSetup() {
  return (
    <div
      role="dialog"
      aria-label="Board Setup"
      className="absolute left-[448px] top-[235px] w-[1269px] h-[737px] flex flex-col rounded-xl overflow-hidden bg-[#f0f0f0] ring-2 ring-[#33393f] shadow-[0_24px_60px_rgba(0,0,0,0.6)] text-[17px] leading-6 text-black"
    >
      <header className="h-[42px] shrink-0 flex items-center justify-between pl-[11px] pr-4 bg-[#f3f3f3]">
        <h1>Board Setup</h1>
        <button type="button" aria-label="Close">
          <svg viewBox="0 0 16 16" className="size-4" fill="none" aria-hidden="true">
            <path d="M.500.500l15 15M15.500.500l-15 15" stroke="#1a1a1a" strokeWidth="1.400" />
          </svg>
        </button>
      </header>

      <div className="flex-1 min-h-0 flex overflow-hidden">
        <SettingsTree />
        <div className="flex-1 flex pl-2.5 pt-3">
          <div className="w-[502px] shrink-0">
            {sections.map((s) => (
              <section key={s.title}>
                <h2 className={`mb-[9px] ${s.indent}`}>{s.title}</h2>
                <div className="flex flex-col gap-2.5">
                  {s.rows.map((row) => (
                    <label key={row.label} className="flex items-center pl-[27px]">
                      <Icon className="size-8">{row.icon}</Icon>
                      <span className="w-[228px] ml-[27px] whitespace-nowrap">{row.label}</span>
                      <input type="text" defaultValue={row.value} className={`w-[146px] ${fieldClass}`} />
                      <span className="ml-1.5">mm</span>
                    </label>
                  ))}
                </div>
                <hr className={`border-[#a0a0a0] mb-1.5 ${s.gap}`} />
              </section>
            ))}
            <h2 className="pl-1">Silkscreen</h2>
          </div>

          <div className="w-[442px] ml-9 shrink-0">
            <section>
              <h2 className="pl-[5px] mb-1.5">Arc/Circle Approximated by Segments</h2>
              <label className="flex items-center pl-[21px]">
                <span className="w-[233px] whitespace-nowrap">Maximum allowed deviation:</span>
                <input type="text" defaultValue="0.005" className={`w-[146px] ${fieldClass}`} />
                <span className="ml-1.5">mm</span>
              </label>
              <p className="pl-[5px] mt-[11px] text-[15px] leading-5">Note: zone filling can be slow when &lt; 0.005 mm.</p>
              <hr className="mt-[22px] border-[#a0a0a0]" />
            </section>
            <section className="pt-5">
              <h2 className="pl-[5px]">Zone Fill Strategy</h2>
              <div className="mt-[9px] pl-[5px] flex items-center">
                <svg viewBox="0 0 32 32" className="size-8 mr-2.5" fill="none" aria-hidden="true">
                  <path d="M0 0h9v23h23v9H0z" fill="#39b4ea" />
                  <path d="M9 0c1 16 8 21 23 23H9z" fill="#39b4ea" />
                  <path d="M9 0v23h23M10 2c1 14 8 19 20 21" stroke={DARK} strokeWidth="1.200" />
                  <path d="M7 21h4v4H7z" fill={DARK} />
                </svg>
                <Check label="Allow fillets/chamfers outside zone outline" />
              </div>
              <div className="mt-[11px] pl-[5px] flex items-center">
                <svg viewBox="0 0 32 32" className="size-8 mr-[11px]" fill="none" aria-hidden="true">
                  <path d="M0 0h32v32H0z" fill="#39b4ea" />
                  <circle cx="18.500" cy="18" r="9.500" stroke="#fff" strokeWidth="2.500" strokeDasharray="11 4" strokeDashoffset="-2" />
                  <circle cx="18.500" cy="18" r="5" fill="#fff" stroke={DARK} strokeWidth="4" />
                </svg>
                <label htmlFor="spokes" className="w-[297px] whitespace-nowrap">
                  Minimum thermal relief spoke count:
                </label>
                <input id="spokes" type="text" inputMode="numeric" defaultValue="2" className={`w-[38px] ${fieldClass}`} />
                <span className="flex flex-col w-[26px] h-[33px] border border-[#a8a8a8] border-l-0">
                  <button type="button" aria-label="More" className="flex-1 flex items-center justify-center bg-[#fdfdfd] border border-[#d0d0d0]">
                    <svg viewBox="0 0 10 6" className="w-2.5 h-1.5" aria-hidden="true">
                      <path d="M5 0l5 6H0z" fill="#000" />
                    </svg>
                  </button>
                  <button type="button" aria-label="Fewer" className="flex-1 flex items-center justify-center bg-[#fdfdfd] border border-[#d0d0d0]">
                    <svg viewBox="0 0 10 6" className="w-2.5 h-1.5" aria-hidden="true">
                      <path d="M5 6L0 0h10z" fill="#000" />
                    </svg>
                  </button>
                </span>
              </div>
              <hr className="mt-[17px] border-[#a0a0a0]" />
            </section>
            <section className="pt-5">
              <h2 className="pl-[5px] mb-[11px]">Length Tuning</h2>
              <Check label="Include stackup height in track length calculations" checked className="gap-[5px] pl-[5px]" />
            </section>
          </div>

          <div className="ml-1.5 -mt-3 flex-1 border-l-2 border-white flex pl-[9px] pt-[27px]">
            <div className="w-[5px] h-[494px] rounded-full bg-[#858585]" />
          </div>
        </div>
      </div>

      <footer className="h-[46px] shrink-0 flex items-center gap-3 pl-[11px] pr-3 border-t-2 border-[#e3e3e3]">
        <button type="button" className={`w-[331px] ${buttonClass}`}>
          Import Settings from Another Board...
        </button>
        <button type="button" className={`w-[110px] ml-auto ${buttonClass}`}>
          OK
        </button>
        <button type="button" className={`w-[110px] ${buttonClass}`}>
          Cancel
        </button>
      </footer>
      <svg viewBox="0 0 12 12" className="absolute right-1 bottom-0.5 size-3" fill="#b9b9b9" aria-hidden="true">
        <path d="M8 0h3v3H8zM8 4h3v3H8zM4 4h3v3H4zM8 8h3v3H8zM4 8h3v3H4zM0 8h3v3H0z" />
      </svg>
    </div>
  );
}

/* ---------- right sidebar ---------- */

const layers = [
  { name: "F.Cu", color: "#c83434" },
  { name: "B.Cu", color: "#4d7fc4" },
  { name: "F.Adhesive", color: "#840084" },
  { name: "B.Adhesive", color: "#000084" },
  { name: "F.Paste", color: "#a5948c" },
  { name: "B.Paste", color: "#00b4b0" },
  { name: "F.Silkscreen", color: "#f2eda1" },
  { name: "B.Silkscreen", color: "#e8b2a7" },
  { name: "F.Mask", color: "#5a2a68", check: "#6d3e7d" },
  { name: "B.Mask", color: "#02695e", check: "#187b72" },
  { name: "User.Drawings", color: "#c2c2c2" },
  { name: "User.Comments", color: "#5994dc" },
  { name: "User.Eco1", color: "#b4dbd2" },
  { name: "User.Eco2", color: "#d8c852" },
  { name: "Edge.Cuts", color: "#d0d2cd" },
  { name: "Margin", color: "#ff26e2" },
  { name: "F.Courtyard", color: "#ff26e2" },
  { name: "B.Courtyard", color: "#26e9ff" },
  { name: "F.Fab", color: "#afafaf" },
  { name: "B.Fab", color: "#585d84" },
  { name: "User.1", color: "#c2c2c2" },
  { name: "User.2", color: "#5994dc" },
  { name: "User.3", color: "#b4dbd2" },
  { name: "User.4", color: "#d8c852" },
];

const filters: Array<[string, boolean]> = [
  ["All items", true],
  ["Locked items", false],
  ["Footprints", true],
  ["Text", true],
  ["Tracks", true],
  ["Vias", true],
  ["Pads", true],
  ["Graphics", true],
  ["Zones", true],
  ["Rule Areas", true],
  ["Dimensions", true],
  ["Other items", true],
];

function Sidebar() {
  const [active, setActive] = useState("F.Cu");
  return (
    <aside className="w-[306px] shrink-0 flex flex-col border-l-[6px] border-[#dadada] bg-[#f0f0f0] text-[15px] leading-5 text-black">
      <h2 className="h-[31px] shrink-0 flex items-center pl-[5px] bg-[#b9b9b9] text-[17px]">Appearance</h2>
      <div role="tablist" className="flex items-end pl-px pt-1.5 text-[17px]">
        <button type="button" role="tab" aria-selected="true" className="h-[33px] w-[74px] bg-[#f9f9f9] border-t border-[#e4e4e4] text-left pl-[7px]">
          Layers
        </button>
        <button type="button" role="tab" aria-selected="false" className="h-8 w-[70px] border border-b-0 border-[#e4e4e4] bg-[#f3f3f3]">
          Objects
        </button>
        <button type="button" role="tab" aria-selected="false" className="h-8 w-[70px] border border-b-0 border-l-0 border-[#e4e4e4] bg-[#f3f3f3] text-left pl-[7px]">
          Nets
        </button>
      </div>

      <div className="flex-1 flex flex-col mr-[3px] border border-t-0 border-[#e4e4e4] bg-[#f9f9f9] px-[3px]">
        <ul className="flex-1 bg-[#f0f0f0]">
          {layers.map((l) => (
            <li key={l.name} className={`h-6 flex items-center ${l.name === active ? "bg-[#e1e1e1]" : ""}`}>
              <span className="w-[21px] pl-2 flex shrink-0">
                {l.name === active ? (
                  <svg viewBox="0 0 8 12" className="w-2 h-3" aria-hidden="true">
                    <path d="M0 0l8 6-8 6z" fill="#4040ff" />
                  </svg>
                ) : null}
              </span>
              <svg viewBox="0 0 20 20" className="size-5" aria-hidden="true">
                <path d="M0 0h20v20H0z" fill={l.color} />
                {l.check ? <path d="M0 0h8v9H0zM15 0h5v9h-5zM8 9h8v9H8z" fill={l.check} /> : null}
              </svg>
              <svg viewBox="0 0 16 12" className="w-4 h-3 ml-1.5 mr-[5px]" aria-hidden="true">
                <ellipse cx="8" cy="6" rx="8" ry="6" fill={DARK} />
                <ellipse cx="8" cy="6" rx="5.500" ry="3" fill="#fff" />
                <circle cx="8" cy="6" r="2.400" fill={DARK} />
                <circle cx="8" cy="6" r="1" fill="#ccc" />
              </svg>
              <button type="button" onClick={() => setActive(l.name)}>
                {l.name}
              </button>
            </li>
          ))}
        </ul>
        <fieldset className="mt-[5px] mb-1 ml-[5px] mr-0.5 bg-white h-[118px]">
          <button type="button" className="h-6 flex items-center gap-[5px] pl-[5px] text-[#6d6d6d]">
            <svg viewBox="0 0 11 6" className="w-[11px] h-1.5" aria-hidden="true">
              <path d="M0 0h11L5.500 6z" fill="#545454" />
            </svg>
            Layer Display Options
          </button>
          <p className="mt-[9px]">Inactive layers (H):</p>
          <div className="mt-1.5 flex">
            {["Normal", "Dim", "Hide"].map((mode) => (
              <label
                key={mode}
                className={`flex items-center gap-[5px] ${mode === "Normal" ? "w-[110px]" : "w-[87px]"}`}
              >
                <input
                  type="radio"
                  name="inactive"
                  defaultChecked={mode === "Normal"}
                  className="size-5 appearance-none rounded-full border border-[#868686] bg-[#f5f5f5] checked:border-[6px] checked:border-[#005fb8] checked:bg-white"
                />
                {mode}
              </label>
            ))}
          </div>
          <hr className="mt-[7px] mb-1.5 border-[#a0a0a0]" />
          <Check label="Flip board view" />
        </fieldset>
      </div>

      <div className="pl-[7px] pr-[7px] pt-[13px] pb-[5px] flex flex-col">
        <p>Presets (Ctrl+Tab):</p>
        <Combo label="Presets (Ctrl+Tab)" value="---" className="mt-[2px] w-full h-[33px]" />
        <p className="mt-1.5">Viewports (Shift+Tab):</p>
        <Combo label="Viewports (Shift+Tab)" value="---" className="mt-[2px] w-full h-[33px]" />
      </div>

      <h2 className="h-[38px] shrink-0 flex items-center pl-[5px] border-t-[6px] border-[#dadada] bg-[#b9b9b9] text-[17px]">
        Selection Filter
      </h2>
      <div className="grid grid-cols-[127px_1fr] auto-rows-[25px] pl-[5px] pt-1 pb-[5px]">
        {filters.map(([label, on]) => (
          <Check key={label} label={label} checked={on} />
        ))}
      </div>
    </aside>
  );
}

/* ---------- window ---------- */

const menus = ["File", "Edit", "View", "Place", "Route", "Inspect", "Tools", "Preferences", "Help"];

const counts = [
  { label: "Pads", value: "60", width: "w-[85px]" },
  { label: "Vias", value: "0", width: "w-[79px]" },
  { label: "Track Segments", value: "173", width: "w-[172px]" },
  { label: "Nets", value: "30", width: "w-[83px]" },
  { label: "Unrouted", value: "0", width: "w-[90px]" },
];

const status = [
  { text: "Z 5.17", width: "w-[117px]" },
  { text: "X 127.1228  Y 74.5292", width: "w-[251px]" },
  { text: "dx 127.1228  dy 74.5292  dist 147.3595", width: "w-[396px]" },
  { text: "grid 0.0254", width: "w-[288px]" },
  { text: "mm", width: "w-[90px]" },
  { text: "", width: "w-[254px]" },
];

function BarRule({ className }: { className: string }) {
  return <span className={`w-px shrink-0 bg-[#8f8f8f] ${className}`} />;
}

export default function App() {
  return (
    <div className="min-h-screen flex bg-[#dcdcdc] font-['Open_Sans','Noto_Sans',sans-serif] overflow-hidden">
      <div className="flex-1 min-w-0 flex flex-col mb-0.5 bg-[#f0f0f0] border-r border-[#b0b0b0] shadow-[0_0_6px_rgba(0,0,0,0.4)]">
        <header className="h-[35px] shrink-0 flex items-center bg-[#f3f3f3] text-[17px] text-[#8f8f8f]">
          <svg viewBox="0 0 10 24" className="w-2.5 h-6 mr-[9px] self-start" aria-hidden="true">
            <path d="M0 0h7a3 3 0 013 3v18a3 3 0 01-3 3H0z" fill="#136b13" />
            <path d="M0 8l10-4v10H6zM0 20l5-3v7H0z" fill="#489648" />
            <circle cx="5" cy="14" r="2" fill="#e8d47c" stroke={ORANGE} />
            <circle cx="5" cy="20" r="1.500" fill={ORANGE} />
          </svg>
          <span className="pb-2.5">*Digital_Contour_Profiler_RP2040 — PCB Editor</span>
          <div className="ml-auto mr-[27px] pb-2.5 flex items-center gap-[54px]">
            <button type="button" aria-label="Minimize">
              <svg viewBox="0 0 16 16" className="size-4" fill="none" stroke="#8a8a8a" aria-hidden="true">
                <path d="M0 8.500h16" />
              </svg>
            </button>
            <button type="button" aria-label="Maximize">
              <svg viewBox="0 0 16 16" className="size-4" fill="none" stroke="#8a8a8a" aria-hidden="true">
                <rect x="1" y="1" width="14" height="14" rx="1.500" strokeWidth="1.300" />
              </svg>
            </button>
            <button type="button" aria-label="Close window">
              <svg viewBox="0 0 16 16" className="size-4" fill="none" stroke="#8a8a8a" aria-hidden="true">
                <path d="M.500.500l15 15M15.500.500l-15 15" strokeWidth="1.200" />
              </svg>
            </button>
          </div>
        </header>

        <nav className="h-7 pt-[3px] shrink-0 flex items-center gap-[23px] bg-white text-base leading-6 text-[#6d6d6d] overflow-hidden">
          {menus.map((m) => (
            <button key={m} type="button" className={m === "File" ? "-ml-[14px]" : ""}>
              {m}
            </button>
          ))}
        </nav>

        <div className="h-[56px] shrink-0 flex items-center overflow-hidden">
          {topTools.map((t, i) =>
            t ? (
              <button
                key={t.name}
                type="button"
                aria-label={t.name}
                className={`w-[49px] h-12 shrink-0 flex items-center justify-center ${i === 0 ? "-ml-[18px]" : ""}`}
              >
                <Icon>{t.icon}</Icon>
              </button>
            ) : (
              <BarRule key={i} className="h-[42px] mx-1" />
            ),
          )}
        </div>

        <div className="h-[50px] shrink-0 flex items-center pb-1.5 pt-px overflow-hidden text-[17px]">
          <Combo label="Track width" value="Track: use netclass width" className="-ml-[23px] w-[235px] h-[33px]" />
          <button
            type="button"
            aria-label="Use starting track width"
            className="ml-1 mr-1.5 w-[46px] h-[46px] shrink-0 flex items-center justify-center border border-[#0078d7] bg-[#b3d6f3]"
          >
            <Icon>
              <path d="M2 0v14c0 3 1 6 5 6h10c4 0 5-3 5-6V0" stroke={DARK} strokeWidth="1.600" />
              <path d="M7 8h10M7 12h10" stroke={DARK} strokeWidth="1.200" />
              <circle cx="12" cy="20" r="3" fill={BLUE} />
            </Icon>
          </button>
          <BarRule className="h-[42px]" />
          <Combo label="Via size" value="Via: use netclass sizes" className="mx-[5px] w-[221px] h-[33px]" />
          <BarRule className="h-[42px]" />
          <Combo
            label="Layer"
            value="F.Cu (PgUp)"
            swatch
            selectClass="pl-[29px] border-[#9a9a9a]"
            className="mx-[5px] w-[188px] h-[31px]"
          />
          <svg viewBox="0 0 36 36" className="size-9 mx-[3px] shrink-0" aria-hidden="true">
            <path d="M0 0h27L10 36H0z" fill="#c83434" />
            <path d="M27 0h9v36H12z" fill="#4d7fc4" />
            <path d="M26 0L10 36" stroke="#f0f0f0" strokeWidth="3" />
            <path d="M26 0L10 36" stroke="#444" strokeWidth="1" />
          </svg>
          <BarRule className="h-[42px] ml-1.5 mr-[7px]" />
          <Combo label="Grid" value="0.0254 mm (0.0010 in)" className="mr-1.5 w-[225px] h-[33px]" />
          <BarRule className="h-[42px]" />
          <Combo label="Zoom" value="Zoom 5.00" className="ml-1.5 w-[144px] h-[33px]" />
        </div>

        <div className="flex-1 flex">
          <div className="w-[27px] shrink-0 flex flex-col items-end pr-[3px] pt-[7px] overflow-hidden">
            <ToolStrip tools={leftTools} />
          </div>
          <main className="relative flex-1 min-w-0 overflow-hidden bg-[#001023] border-t border-x border-[#9a9a9a]">
            <BoardCanvas />
            <BoardSetup />
          </main>
          <div className="w-[52px] shrink-0 flex flex-col items-center pt-[7px]">
            <ToolStrip tools={rightTools} />
          </div>
          <Sidebar />
        </div>

        <div className="h-[50px] shrink-0 flex pt-px -ml-2 text-base leading-6 text-[#6d6d6d] border-t-2 border-[#e0e0e0]">
          {counts.map((c) => (
            <dl key={c.label} className={c.width}>
              <dt className="whitespace-nowrap">{c.label}</dt>
              <dd>{c.value}</dd>
            </dl>
          ))}
        </div>
        <footer className="h-[33px] shrink-0 flex items-end border-t border-[#d7d7d7] pl-[887px] text-[17px] leading-6 text-black">
          {status.map((s, i) => (
            <span key={i} className={`h-[30px] flex items-center shrink-0 pl-1 whitespace-pre border-l border-[#dcdcdc] ${s.width}`}>
              {s.text}
            </span>
          ))}
          <span className="h-[30px] border-l border-[#dcdcdc]" />
          <svg viewBox="0 0 12 12" className="ml-auto mr-px mb-px size-3" fill="#b9b9b9" aria-hidden="true">
            <path d="M8 0h3v3H8zM8 4h3v3H8zM4 4h3v3H4zM8 8h3v3H8zM4 8h3v3H4zM0 8h3v3H0z" />
          </svg>
        </footer>
      </div>
      <div className="w-[9px] shrink-0 bg-[#e3e3e3] border-l-2 border-[#cfcfcf]" />
    </div>
  );
}
